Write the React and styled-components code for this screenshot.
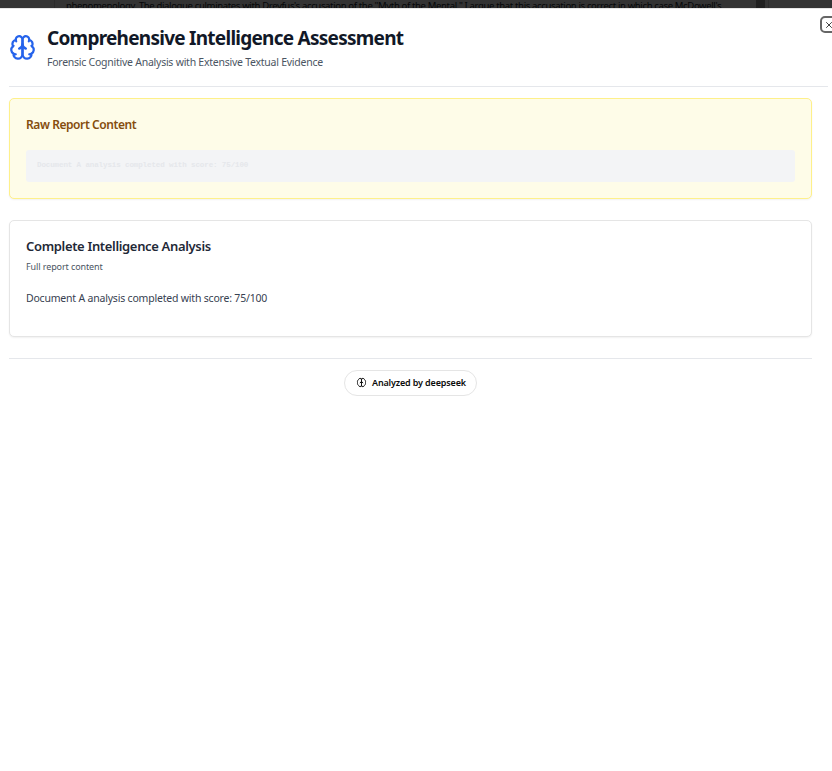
import React from "react";
import styled, { createGlobalStyle } from "styled-components";

const GlobalStyle = createGlobalStyle`
  * { box-sizing: border-box; }
  html, body { margin: 0; overflow: hidden; background: #333; }
  body { font-family: "Noto Sans", "Open Sans", sans-serif; }
  h1, h2, p, pre { margin: 0; }
`;

const Page = styled.div`
  height: 771px;
  display: flex;
  flex-direction: column;
  background: #333;
`;

const Backdrop = styled.div`
  height: 8px;
  flex: none;
  display: flex;
  background: #333;
`;

const BackdropText = styled.div`
  width: 702px;
  margin-left: 54px;
  padding-left: 11px;
  border-left: 1px solid #2b2b2b;
  font-size: 9.5px;
  line-height: 14px;
  height: 14px;
  margin-top: -1px;
  letter-spacing: ${(p) => p.$track}px;
  color: #050608;
  white-space: nowrap;
`;

const BackdropScroll = styled.div`
  width: 9px;
  background: #1f1f1f;
`;

const BackdropEdge = styled.div`
  width: 4px;
  border-right: 1px solid #2b2b2b;
`;

const Dialog = styled.main`
  position: relative;
  flex: 1;
  display: flex;
  flex-direction: column;
  padding: 12px 0 0 9px;
  border-top: 1px solid #e5e5e5;
  background: #fff;
`;

const Header = styled.header`
  display: flex;
  align-items: flex-start;
  width: 819px;
  height: 66px;
  gap: 11px;
  border-bottom: 1px solid #e5e7eb;
`;

const HeaderIcon = styled.div`
  display: flex;
  width: 27px;
  padding-top: 13px;
  color: #2563eb;
`;

const HeaderText = styled.div`
  display: flex;
  flex-direction: column;
`;

const Line = styled.p`
  font-size: ${(p) => p.$size}px;
  line-height: ${(p) => p.$height}px;
  font-weight: ${(p) => p.$weight || 400};
  letter-spacing: ${(p) => p.$track || 0}px;
  color: ${(p) => p.$color};
  white-space: nowrap;
`;

const CloseButton = styled.button`
  position: absolute;
  top: 7px;
  left: 820px;
  width: 18px;
  height: 17px;
  display: flex;
  align-items: center;
  justify-content: flex-start;
  padding: 0 0 0 3px;
  border: 2px solid #666;
  border-radius: 5px;
  background: #fff;
  color: #444;
`;

const Body = styled.div`
  display: flex;
  flex-direction: column;
  width: 803px;
  padding-top: 11px;
`;

const Card = styled.section`
  display: flex;
  flex-direction: column;
  height: ${(p) => p.$height}px;
  padding: 16px;
  border: 1px solid ${(p) => p.$border};
  border-radius: 5px;
  background: ${(p) => p.$background};
  box-shadow: 0 1px 2px rgba(0, 0, 0, 0.06);
  & + & { margin-top: 21px; }
`;

const RawBlock = styled.pre`
  height: 32px;
  margin-top: 15px;
  padding: 9px 11px;
  border-radius: 3px;
  background: #f3f4f6;
  color: #e5e7eb;
  font-family: "Liberation Mono", monospace;
  font-weight: 700;
  font-size: 7.5px;
  line-height: 12px;
  letter-spacing: -0.1px;
`;

const Paragraph = styled.div`
  margin-top: 15px;
`;

const Footer = styled.footer`
  display: flex;
  justify-content: center;
  margin-top: 21px;
  padding-top: 11px;
  border-top: 1px solid #e5e7eb;
`;

const Badge = styled.div`
  display: flex;
  align-items: center;
  gap: 5px;
  width: 133px;
  height: 26px;
  padding-left: 11px;
  border: 1px solid #e5e5e5;
  border-radius: 13px;
  color: #0a0a0a;
`;

const BadgeIcon = styled.span`
  display: flex;
  padding-bottom: 1px;
`;

function Brain({ size }) {
  return (
    <svg width={size} height={size} viewBox="0 0 24 24" fill="none" stroke="currentColor" strokeWidth="2" strokeLinecap="round" strokeLinejoin="round">
      <path d="M12 5a3 3 0 1 0-5.997.125 4 4 0 0 0-2.526 5.77 4 4 0 0 0 .556 6.588A4 4 0 1 0 12 18Z" />
      <path d="M12 5a3 3 0 1 1 5.997.125 4 4 0 0 1 2.526 5.77 4 4 0 0 1-.556 6.588A4 4 0 1 1 12 18Z" />
      <path d="M15 13a4.5 4.5 0 0 1-3-4 4.5 4.5 0 0 1-3 4" />
      <path d="M17.599 6.5a3 3 0 0 0 .399-1.375" />
      <path d="M6.003 5.125A3 3 0 0 0 6.401 6.5" />
      <path d="M3.477 10.896a4 4 0 0 1 .585-.396" />
      <path d="M19.938 10.5a4 4 0 0 1 .585.396" />
      <path d="M6 18a4 4 0 0 1-1.967-.516" />
      <path d="M19.967 17.484A4 4 0 0 1 18 18" />
    </svg>
  );
}

function BadgeBrain() {
  return (
    <svg width="11" height="11" viewBox="0 0 11 11" fill="none" stroke="currentColor" strokeWidth="0.95" strokeLinecap="round">
      <path d="M5.5 2C4.9.9 3.1 1 2.7 2.4 1.5 3.2 1.3 4.3 1.5 5.5 1.3 6.8 1.7 7.8 2.6 8.5 3.2 10 4.9 10.1 5.5 9" />
      <path d="M5.5 2C6.1.9 7.9 1 8.3 2.4 9.5 3.2 9.7 4.3 9.5 5.5 9.7 6.8 9.3 7.8 8.4 8.5 7.8 10 6.1 10.1 5.5 9" />
      <path d="M5.5 2V9M4.2 5.8Q5.4 5.2 5.5 4.2Q5.6 5.2 6.8 5.8" />
    </svg>
  );
}

function Cross() {
  return (
    <svg width="8" height="8" viewBox="0 0 8 8" fill="none" stroke="currentColor" strokeWidth="1">
      <path d="M1.2 1.2l5.6 5.6M6.8 1.2l-5.6 5.6" />
    </svg>
  );
}

export default function App() {
  return (
    <Page>
      <GlobalStyle />
      <Backdrop>
        <BackdropText $track={-0.345}>
          phenomenology. The dialogue culminates with Dreyfus's accusation of the "Myth of the Mental." I argue that this accusation is correct in which case McDowell's
        </BackdropText>
        <BackdropScroll />
        <BackdropEdge />
      </Backdrop>
      <Dialog>
        <Header>
          <HeaderIcon><Brain size={27} /></HeaderIcon>
          <HeaderText>
            <Line as="h1" $size={19} $height={34} $weight={700} $track={-0.74} $color="#111827">Comprehensive Intelligence Assessment</Line>
            <Line $size={10.5} $height={14} $track={-0.25} $color="#4b5563">Forensic Cognitive Analysis with Extensive Textual Evidence</Line>
          </HeaderText>
        </Header>
        <CloseButton aria-label="Close"><Cross /></CloseButton>
        <Body>
          <Card $height={101} $border="#fef08a" $background="#fefce8">
            <Line as="h2" $size={12} $height={20} $weight={600} $track={-0.42} $color="#854d0e">Raw Report Content</Line>
            <RawBlock>Document A analysis completed with score: 75/100</RawBlock>
          </Card>
          <Card $height={117} $border="#e5e5e5" $background="#fff">
            <Line as="h2" $size={13} $height={19} $weight={600} $track={-0.34} $color="#1f2937">Complete Intelligence Analysis</Line>
            <Line $size={9} $height={21} $track={-0.1} $color="#4b5563">Full report content</Line>
            <Paragraph>
              <Line $size={10.5} $height={12} $track={-0.2} $color="#374151">Document A analysis completed with score: 75/100</Line>
            </Paragraph>
          </Card>
          <Footer>
            <Badge>
              <BadgeIcon><BadgeBrain /></BadgeIcon>
              <Line as="span" $size={9} $height={14} $weight={600} $track={-0.15} $color="#0a0a0a">Analyzed by deepseek</Line>
            </Badge>
          </Footer>
        </Body>
      </Dialog>
    </Page>
  );
}
